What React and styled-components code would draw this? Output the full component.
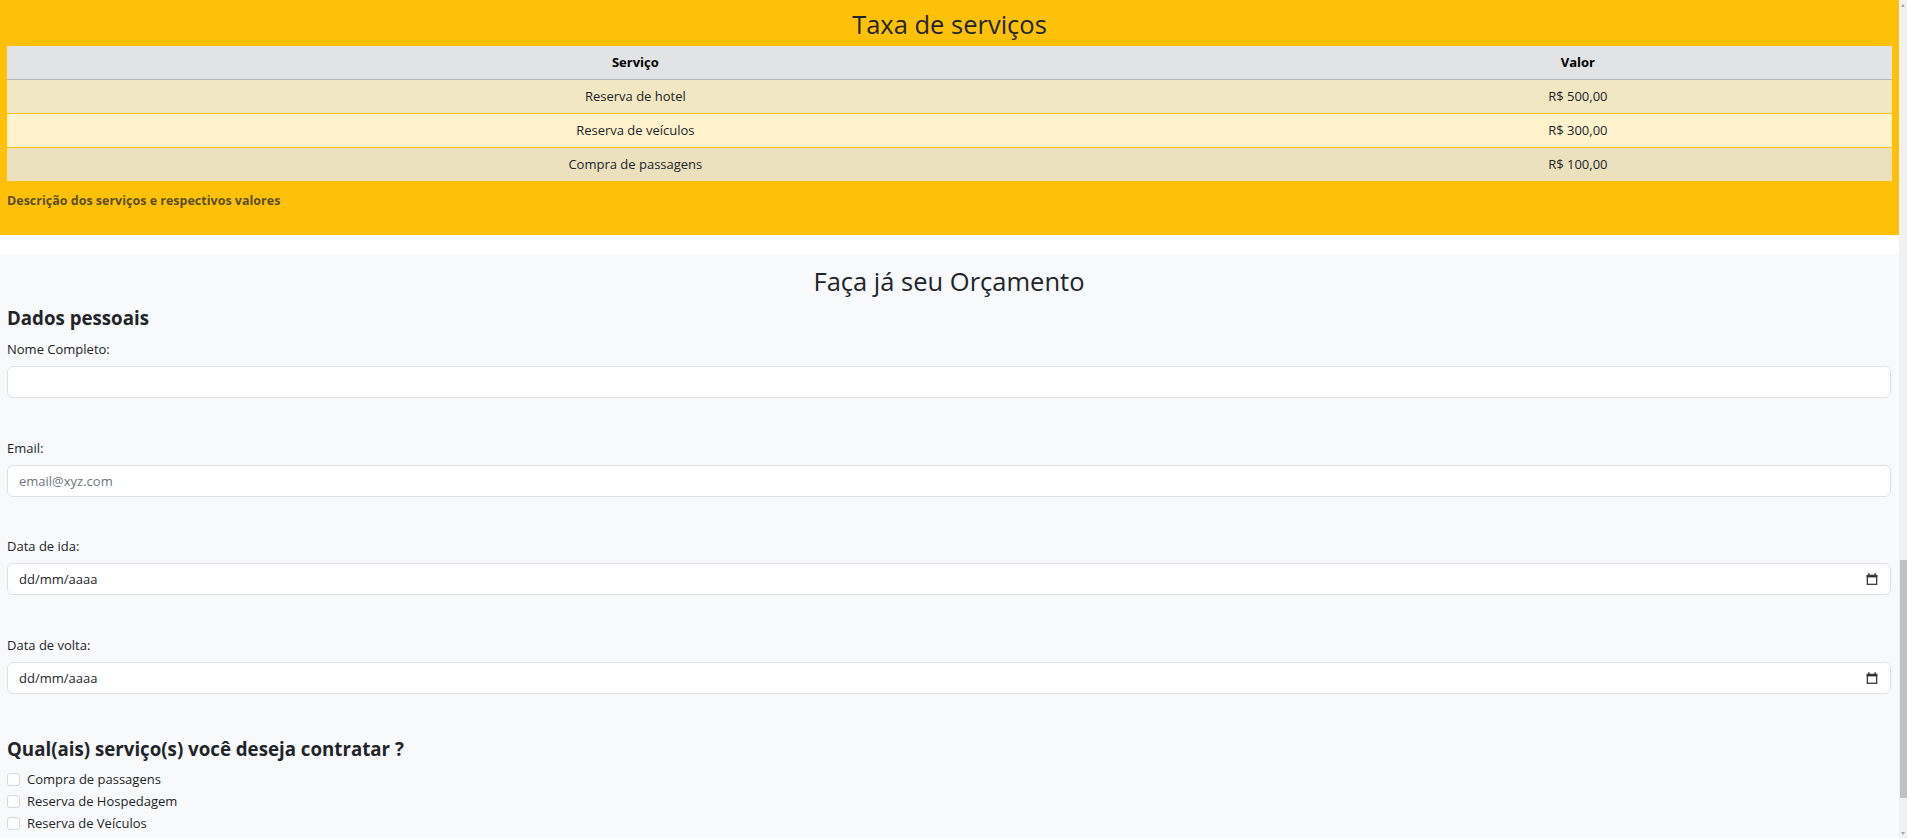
import React from "react";
import styled, { createGlobalStyle } from "styled-components";

const GlobalStyle = createGlobalStyle`
  html, body {
    margin: 0;
    padding: 0;
    height: 100%;
    overflow: hidden;
  }
  body {
    font-family: "Open Sans", "Noto Sans", sans-serif;
    color: #212529;
    background: #fff;
  }
  *, *::before, *::after {
    box-sizing: border-box;
  }
`;

const rates = [
  { service: "Reserva de hotel", value: "R$ 500,00", bg: "#f2e7c3" },
  { service: "Reserva de veículos", value: "R$ 300,00", bg: "#fff3cd" },
  { service: "Compra de passagens", value: "R$ 100,00", bg: "#ece1be" },
];

const services = ["Compra de passagens", "Reserva de Hospedagem", "Reserva de Veículos"];

const Shell = styled.div`
  display: flex;
  height: 100vh;
`;

const Page = styled.main`
  flex: 1;
  min-width: 0;
  overflow: hidden;
`;

const ScrollTrack = styled.div`
  position: relative;
  flex-shrink: 0;
  width: 8px;
  background: #f1f1f1;
`;

const ScrollThumb = styled.div`
  margin: 560px 0 0 1px;
  height: 238px;
  background: #c1c1c1;
`;

const ScrollArrow = styled.span`
  position: absolute;
  left: 2px;
  width: 0;
  height: 0;
  border-left: 2.5px solid transparent;
  border-right: 2.5px solid transparent;
  ${(p) =>
    p.$down
      ? "bottom: 3px; border-top: 3px solid #a3a3a3;"
      : "top: 4px; border-bottom: 3px solid #a3a3a3;"}
`;

const RatesSection = styled.section`
  background: #ffc107;
  padding: 9px 7px 18px;
`;

const SectionTitle = styled.h3`
  margin: 0 0 ${(p) => p.$gap}px;
  font-size: 25.5px;
  font-weight: 400;
  line-height: 1.2;
  text-align: center;
  color: #212529;
`;

const RatesTable = styled.table`
  width: 100%;
  border-collapse: collapse;
  caption-side: bottom;
  font-size: 13px;
`;

const Caption = styled.caption`
  padding: 9px 0 7px;
  text-align: left;
  font-size: 12.5px;
  font-weight: 700;
  line-height: 19.5px;
  color: rgba(33, 37, 41, 0.75);
`;

const HeadCell = styled.th`
  width: ${(p) => p.$width};
  padding: 6px 8px;
  background: #e2e3e5;
  border-bottom: 1px solid #b5b6b7;
  line-height: 21px;
  font-weight: 700;
  color: #000;
  text-align: center;
`;

const Cell = styled.td`
  padding: 6px 8px;
  background: ${(p) => p.$bg};
  border-bottom: 1px solid #ffc107;
  line-height: 21px;
  color: #212529;
  text-align: center;
`;

const QuoteSection = styled.section`
  margin-top: 20px;
  min-height: 600px;
  padding: 10.5px 8px 0 7px;
  background: #f8f9fa;
`;

const GroupTitle = styled.h4`
  margin: ${(p) => p.$top || 0}px 0 ${(p) => p.$bottom}px;
  font-size: 18.7px;
  font-weight: 700;
  line-height: 1.2;
  color: #212529;
`;

const Field = styled.div`
  margin-bottom: 39.5px;
`;

const Label = styled.label`
  display: block;
  margin-bottom: 6px;
  font-size: 13px;
  line-height: 21px;
  color: #212529;
`;

const Input = styled.input`
  display: block;
  width: 100%;
  height: 32px;
  padding: 0 11px;
  border: 1px solid #dee2e6;
  border-radius: 6px;
  background: #fff;
  font-family: inherit;
  font-size: 13px;
  color: #212529;
  outline: none;

  &::placeholder {
    color: #6c757d;
  }
`;

const DateBox = styled.div`
  display: flex;
  align-items: center;
  justify-content: space-between;
  height: 32px;
  padding: 0 12px 0 11px;
  border: 1px solid #dee2e6;
  border-radius: 6px;
  background: #fff;
`;

const DateText = styled.input`
  flex: 1;
  min-width: 0;
  padding: 0;
  border: 0;
  background: transparent;
  font-family: inherit;
  font-size: 13px;
  color: #212529;
  outline: none;
`;

const CheckList = styled.div`
  display: flex;
  flex-direction: column;
`;

const CheckRow = styled.label`
  display: flex;
  align-items: center;
  gap: 7px;
  height: 22px;
  font-size: 13px;
  color: #212529;
`;

const CheckBox = styled.input`
  appearance: none;
  margin: 0;
  width: 13px;
  height: 13px;
  border: 1px solid #d5d9dd;
  border-radius: 3px;
  background: #fff;
`;

const CalendarIcon = () => (
  <svg width="12" height="12" viewBox="0 0 12 12" aria-hidden="true">
    <rect x="2.3" y="0" width="1.2" height="2.2" fill="#3a3a3a" />
    <rect x="8.5" y="0" width="1.2" height="2.2" fill="#3a3a3a" />
    <rect x="0.7" y="1.8" width="10.6" height="2.6" fill="#2b2b2b" />
    <rect x="1.35" y="2.5" width="9.3" height="8.8" fill="none" stroke="#3a3a3a" strokeWidth="1.3" />
  </svg>
);

const DateField = ({ id, label }) => (
  <Field>
    <Label htmlFor={id}>{label}</Label>
    <DateBox>
      <DateText id={id} type="text" defaultValue="dd/mm/aaaa" readOnly />
      <CalendarIcon />
    </DateBox>
  </Field>
);

const App = () => {
  return (
    <Shell>
      <GlobalStyle />
      <Page>
        <RatesSection>
          <SectionTitle $gap={6}>Taxa de serviços</SectionTitle>
          <RatesTable>
            <thead>
              <tr>
                <HeadCell $width="66.67%">Serviço</HeadCell>
                <HeadCell $width="33.33%">Valor</HeadCell>
              </tr>
            </thead>
            <tbody>
              {rates.map((r) => (
                <tr key={r.service}>
                  <Cell $bg={r.bg}>{r.service}</Cell>
                  <Cell $bg={r.bg}>{r.value}</Cell>
                </tr>
              ))}
            </tbody>
            <Caption>Descrição dos serviços e respectivos valores</Caption>
          </RatesTable>
        </RatesSection>

        <QuoteSection>
          <SectionTitle $gap={10.5}>Faça já seu Orçamento</SectionTitle>
          <GroupTitle $bottom={10}>Dados pessoais</GroupTitle>
          <Field>
            <Label htmlFor="nome">Nome Completo:</Label>
            <Input id="nome" type="text" />
          </Field>
          <Field>
            <Label htmlFor="email">Email:</Label>
            <Input id="email" type="email" placeholder="email@xyz.com" />
          </Field>
          <DateField id="ida" label="Data de ida:" />
          <DateField id="volta" label="Data de volta:" />

          <GroupTitle $top={44} $bottom={8}>
            Qual(ais) serviço(s) você deseja contratar ?
          </GroupTitle>
          <CheckList>
            {services.map((s) => (
              <CheckRow key={s}>
                <CheckBox type="checkbox" />
                {s}
              </CheckRow>
            ))}
          </CheckList>
        </QuoteSection>
      </Page>
      <ScrollTrack>
        <ScrollArrow />
        <ScrollThumb />
        <ScrollArrow $down />
      </ScrollTrack>
    </Shell>
  );
};

export default App;
